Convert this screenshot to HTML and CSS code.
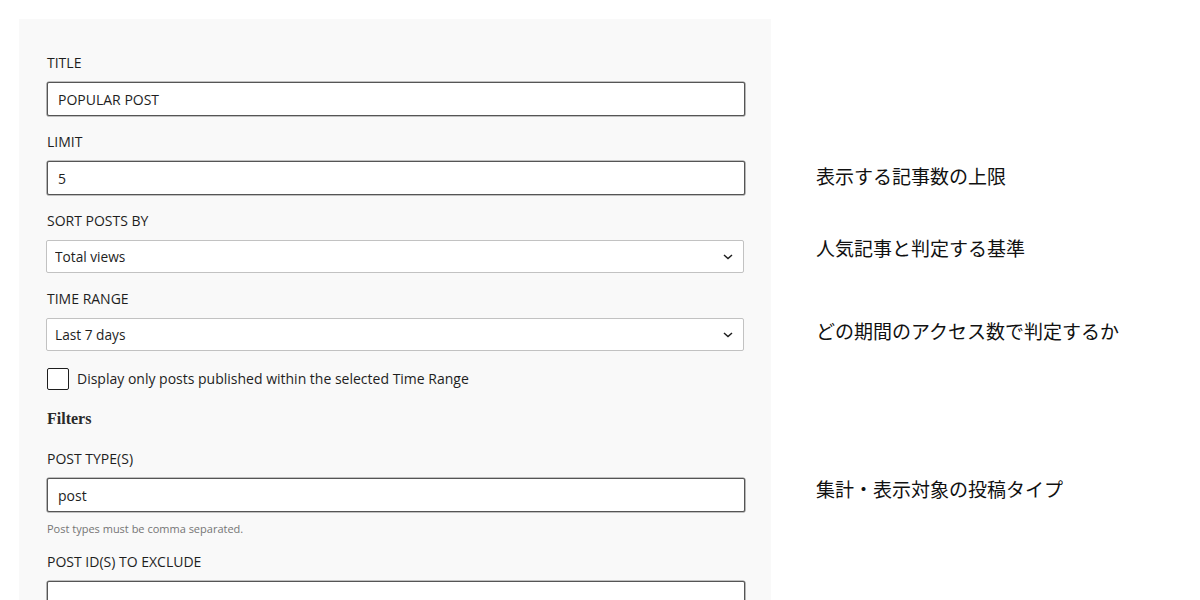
FILE: index.html
```html
<!DOCTYPE html>
<html lang="ja">
<head>
  <meta charset="UTF-8">
  <title>Popular Post Widget</title>
  <meta name="viewport" content="width=device-width, initial-scale=1.0">
  <link rel="stylesheet" href="styles.css">
</head>
<body>
  <div class="page">
    <!-- widget settings -->
    <form class="panel">
      <div class="field">
        <label for="title">TITLE</label>
        <input type="text" id="title" value="POPULAR POST">
      </div>
      <div class="field">
        <label for="limit">LIMIT</label>
        <input type="text" id="limit" value="5">
      </div>
      <div class="field">
        <label for="sort">SORT POSTS BY</label>
        <div class="select-wrap">
          <select id="sort">
            <option>Total views</option>
            <option>Comments</option>
          </select>
          <svg class="chevron" width="10" height="6" viewBox="0 0 10 6"><path d="M1 1l4 3.5L9 1" fill="none" stroke="#1e1e1e" stroke-width="1.5"/></svg>
        </div>
      </div>
      <div class="field">
        <label for="range">TIME RANGE</label>
        <div class="select-wrap">
          <select id="range">
            <option>Last 7 days</option>
            <option>Last 30 days</option>
          </select>
          <svg class="chevron" width="10" height="6" viewBox="0 0 10 6"><path d="M1 1l4 3.5L9 1" fill="none" stroke="#1e1e1e" stroke-width="1.5"/></svg>
        </div>
      </div>
      <label class="check">
        <span class="box"></span>
        Display only posts published within the selected Time Range
      </label>
      <h3>Filters</h3>
      <div class="field tight">
        <label for="ptype">POST TYPE(S)</label>
        <input type="text" id="ptype" value="post">
      </div>
      <p class="help">Post types must be comma separated.</p>
      <div class="field">
        <label for="exclude">POST ID(S) TO EXCLUDE</label>
        <input type="text" id="exclude" value="">
      </div>
    </form>

    <!-- 説明 -->
    <aside class="notes">
      <p class="note n1">表示する記事数の上限</p>
      <p class="note n2">人気記事と判定する基準</p>
      <p class="note n3">どの期間のアクセス数で判定するか</p>
      <p class="note n4">集計・表示対象の投稿タイプ</p>
    </aside>
  </div>
</body>
</html>
```

FILE: styles.css
```css
body { margin: 0; background: #fff; font-family: 'Open Sans', 'Noto Sans', Arial, sans-serif; color: #1e1e1e; }
.page { display: flex; align-items: flex-start; height: 600px; overflow: hidden; }
.panel { width: 752px; flex-shrink: 0; margin: 19px 0 0 19px; padding: 35px 26px 40px 28px; box-sizing: border-box; background: #f9f9f9; min-height: 700px; }
.field { margin-bottom: 17px; }
.field.tight { margin-bottom: 10px; }
.field label { display: block; font-size: 14px; line-height: 18px; font-weight: 500; margin-bottom: 10px; }
.field input { display: block; width: 100%; box-sizing: border-box; height: 34px; padding: 0 10px; border: 1px solid #555; border-radius: 2px; box-shadow: 0 0 0 0.6px #888; background: #fff; font: 14px 'Open Sans', 'Noto Sans', sans-serif; color: #1e1e1e; }
.select-wrap { position: relative; margin: 0 1px 0 -1px; }
.select-wrap select { display: block; width: 100%; height: 33px; padding: 0 8px; appearance: none; -webkit-appearance: none; border: 1px solid #c2c2c2; border-radius: 2px; background: #fff; font: 13.7px 'Open Sans', 'Noto Sans', sans-serif; color: #1e1e1e; }
.chevron { position: absolute; right: 11px; top: 14px; pointer-events: none; }
.check { display: flex; align-items: center; gap: 8px; font-size: 14px; line-height: 22px; margin-bottom: 18px; }
.check .box { width: 20px; height: 20px; border: 1px solid #1e1e1e; border-radius: 2px; background: #fff; flex-shrink: 0; }
h3 { font-family: 'Liberation Serif', 'Times New Roman', serif; font-size: 16px; font-weight: bold; line-height: 22px; margin: 0 0 20px 0; color: #2a2a2a; }
.help { margin: 1px 0 17px 0; font-size: 11px; line-height: 14px; color: #757575; }
.notes { padding-left: 45px; padding-top: 164px; }
.note { margin: 0; font-family: 'Noto Sans CJK JP', sans-serif; font-size: 19px; line-height: 24px; color: #111; }
.n2 { margin-top: 48px; }
.n3 { margin-top: 59px; }
.n4 { margin-top: 134px; }
```
